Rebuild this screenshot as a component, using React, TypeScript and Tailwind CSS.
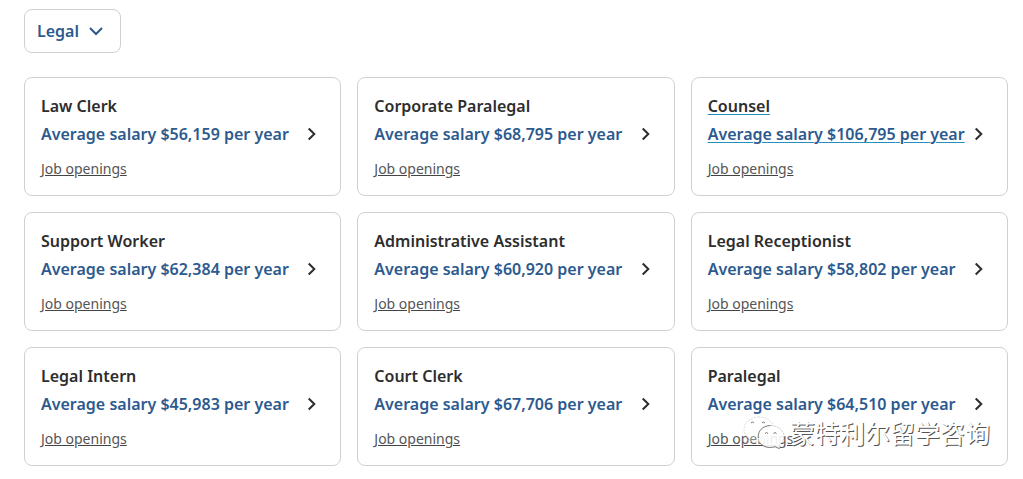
import React from "react"

type Job = {
    id: number
    title: string
    salary: string
    active?: boolean
}

const jobs: Job[] = [
    { id: 1, title: "Law Clerk", salary: "$56,159" },
    { id: 2, title: "Corporate Paralegal", salary: "$68,795" },
    { id: 3, title: "Counsel", salary: "$106,795", active: true },
    { id: 4, title: "Support Worker", salary: "$62,384" },
    { id: 5, title: "Administrative Assistant", salary: "$60,920" },
    { id: 6, title: "Legal Receptionist", salary: "$58,802" },
    { id: 7, title: "Legal Intern", salary: "$45,983" },
    { id: 8, title: "Court Clerk", salary: "$67,706" },
    { id: 9, title: "Paralegal", salary: "$64,510" },
]

function JobCard({ job }: { job: Job }) {
    const line = job.active ? "underline decoration-[#2490bd] decoration-1 underline-offset-2" : ""
    return (
        <li className="rounded-lg border border-[#d0d0d0] p-4">
            <a href="#salary" className="block font-semibold">
                <span className={`block text-[#2d2d2d] ${line}`}>{job.title}</span>
                <span className="mt-1 flex items-center justify-between text-[#2d5a8e]">
                    <span className={`whitespace-nowrap ${line}`}>Average salary {job.salary} per year</span>
                    <svg viewBox="0 0 24 24" className="size-6 shrink-0" fill="none" stroke="#2d2d2d" strokeWidth="2" aria-hidden="true">
                        <path d="M8.700 6.500 14.300 12l-5.600 5.500" />
                    </svg>
                </span>
            </a>
            <a href="#openings" className="mt-3 block w-fit text-sm leading-[21px] text-[#555555] underline decoration-[#444444] underline-offset-1">
                Job openings
            </a>
        </li>
    )
}

function Watermark() {
    return (
        <div className="pointer-events-none absolute right-[18px] bottom-4 flex items-center gap-1">
            <svg viewBox="0 0 44 36" className="h-9 w-11" aria-hidden="true">
                <g fill="#ffffff" stroke="#b5b5b5" strokeWidth="0.7" strokeDasharray="2 1">
                    <path
                        fillOpacity="0.3"
                        d="M17 3C8.500 3 2 8.500 2 15.500c0 4 2 7.300 5.300 9.500L6 29l5-2.500c2 .6 4 .9 6 .9 8.300 0 15-5.400 15-12.200S25.300 3 17 3Z"
                        stroke="#d0d0d0"
                    />
                    <path
                        fillOpacity="0.9"
                        d="M28.500 11.500C21 11.500 16 16.300 16 22.500s5.500 11 12.500 11c1.800 0 3.500-.3 5-.8l4.500 2-1.200-3.500c3.200-2 5.200-5.100 5.200-8.700 0-6.200-6-11-13.500-11Z"
                    />
                </g>
                <g fill="none" stroke="#666666" strokeWidth="0.9">
                    <path d="M9 9q1.500-2 3 0M20 9q1.500-2 3 0M23 19.500q1.500-2 3 0M31.500 19.500q1.500-2 3 0" />
                    <path d="M16.500 24c-1-6 3-12 12-12.500M18 29c4 5 10 5 15 3.700l4.500 2" strokeWidth="0.8" />
                </g>
            </svg>
            <span className="font-['Noto_Sans_CJK_SC',sans-serif] text-[25px] leading-9 text-white [text-shadow:1px_1px_0_#555]">
                蒙特利尔留学咨询
            </span>
        </div>
    )
}

export default function App() {
    return (
        <main className="bg-white pt-[9px] pr-[15px] pb-3 pl-6 font-['Noto_Sans',sans-serif] text-base">
            <button
                type="button"
                aria-haspopup="listbox"
                className="flex h-11 items-center gap-[5px] rounded-lg border border-[#d0d0d0] px-3 font-semibold text-[#2d5a8e]"
            >
                Legal
                <svg viewBox="0 0 24 24" className="size-6" fill="none" stroke="currentColor" strokeWidth="2" aria-hidden="true">
                    <path d="m6 9 6 6 6-6" />
                </svg>
            </button>

            <div className="relative mt-6">
                <ul className="grid grid-cols-3 gap-4">
                    {jobs.map((job) => (
                        <JobCard job={job} key={job.id} />
                    ))}
                </ul>
                <Watermark />
            </div>
        </main>
    )
}
